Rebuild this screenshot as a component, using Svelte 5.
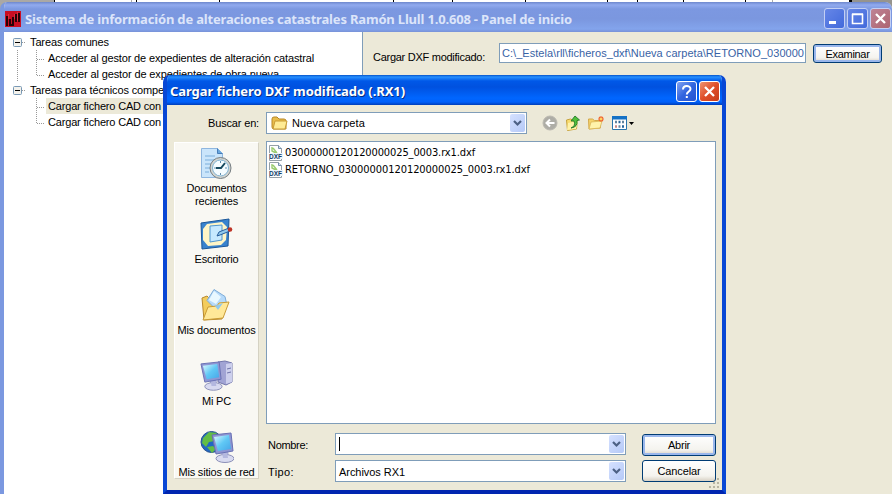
<script>
  const common = [
    { text: 'Acceder al gestor de expedientes de alteración catastral', w: 266 },
    { text: 'Acceder al gestor de expedientes de obra nueva', w: 231 }
  ];
  const technical = [
    { text: 'Cargar fichero CAD con', w: 113, selected: true },
    { text: 'Cargar fichero CAD con', w: 113 }
  ];
  const files = [
    { name: '03000000120120000025_0003.rx1.dxf', w: 190 },
    { name: 'RETORNO_03000000120120000025_0003.rx1.dxf', w: 245 }
  ];

  // Spreads the letters of a label so that it fills the given width.
  function fit(node, width) {
    const n = node.textContent.length;
    const natural = node.getBoundingClientRect().width;
    node.style.letterSpacing = (width - natural) / n + 'px';
  }
</script>

{#snippet arrow()}
  <span class="drop"><svg width="15" height="18" viewBox="0 0 15 18"><path d="M4 7l3.500 3.500L11 7" fill="none" stroke="#4d6185" stroke-width="2.200" /></svg></span>
{/snippet}

{#snippet branch(title, w, items, linked)}
  <div class="node">
    <svg width="26" height="16" viewBox="0 0 26 16">
      <path d="M18 8.500h4" stroke="#999" stroke-dasharray="1 1" />
      <rect x="9.500" y="4.500" width="8" height="8" rx="1" fill="#f4f2ec" stroke="#7898b5" />
      <path d="M11 8.500h5" stroke="#000" />
    </svg>
    <span use:fit={w}>{title}</span>
  </div>
  {#each items as item, i}
    <div class="leaf">
      <svg width="42" height="16" viewBox="0 0 42 16">
        <path d={i === items.length - 1 ? 'M32.5 0v10' : 'M32.5 0v16'} stroke="#999" stroke-dasharray="1 1" />
        <path d="M33 9.500h8" stroke="#999" stroke-dasharray="1 1" />
        {#if linked}<path d="M13.500 0v16" stroke="#999" stroke-dasharray="1 1" />{/if}
      </svg>
      <div class="leaf-text" class:selected={item.selected}><span use:fit={item.w}>{item.text}</span></div>
    </div>
  {/each}
{/snippet}

{#snippet monitor()}
  <path d="M10 19l7-1 1 8h-7z" fill="#a4a9d7" />
  <ellipse cx="14" cy="26.500" rx="9" ry="4" fill="#d8daf0" stroke="#8c90b8" />
  <path d="M11 20l5-1 1 7h-5z" fill="#b4b8df" />
  <path d="M1 3l19-2 2 18-17 3z" fill="#8e96d3" stroke="#6970b3" />
  <path d="M3 5l15-2 2 14-13 2z" fill="url(#screen)" />
{/snippet}

<div class="desktop">
  <svg class="behind" width="892" height="10" viewBox="0 0 892 10">
    <path d="M0 0h54v10H0z" fill="#aaa8a5" />
    <path d="M54.500 0v3M136.500 0v2M219.500 0v2M393.500 0v2M452.500 0v2M525.500 0v2M607.500 0v2M637.500 0v2M683.500 0v2M745.500 0v2" stroke="#000" />
    <path d="M131.500 0v3M772.500 0v3" stroke="#aaa" />
    <path d="M849 0h3v8h-3z" fill="#000" /><path d="M852 0h40v10h-40z" fill="#96948e" />
  </svg>

  <div class="window">
    <header class="main-title">
      <svg class="app-icon" width="16" height="16" viewBox="0 0 16 16">
        <path d="M0 0h16v16H0z" fill="#c90d22" />
        <path d="M2 5v10M5 8v6h3V6M11 3v8M14 2v9" fill="none" stroke="#280306" stroke-width="2" />
        <path d="M3.500 3v5M9.500 3v5M12.500 1v9" stroke="#ef4150" stroke-width=".6" />
      </svg>
      <span class="title-text" use:fit={547}>Sistema de información de alteraciones catastrales Ramón Llull 1.0.608 - Panel de inicio</span>
      <div class="controls">
        <span class="ctl"><svg viewBox="0 0 19 19"><path d="M4 13.500h7" stroke="#fff" stroke-width="3" /></svg></span>
        <span class="ctl"><svg viewBox="0 0 19 19"><path d="M4.500 5.500h10v9h-10zM4 5h11" fill="none" stroke="#fff" stroke-width="1.600" /></svg></span>
        <span class="ctl close"><svg viewBox="0 0 19 19"><path d="M5 5l9 9M14 5l-9 9" stroke="#fff" stroke-width="2.300" /></svg></span>
      </div>
    </header>
    <div class="content">
      <nav class="tree">
        {@render branch('Tareas comunes', 79, common, true)}
        {@render branch('Tareas para técnicos compe', 134, technical, false)}
      </nav>
      <main>
        <div class="load-row">
          <label for="path"><span use:fit={112}>Cargar DXF modificado:</span></label>
          <div class="path" id="path"><span use:fit={302}>C:\_Estela\rll\ficheros_dxf\Nueva carpeta\RETORNO_030000</span></div>
          <button class="focus browse"><span use:fit={44}>Examinar</span></button>
        </div>
      </main>
    </div>
  </div>

  <section class="dialog">
    <header class="dialog-title">
      <span class="title-text" use:fit={235}>Cargar fichero DXF modificado (.RX1)</span>
      <div class="controls">
        <span class="ctl"><svg viewBox="0 0 19 19"><path d="M6 7.500c0-4.500 7.500-4.500 7.500-.5 0 2.500-3.700 2.500-3.700 5.500M9.800 14v2" fill="none" stroke="#fff" stroke-width="2" /></svg></span>
        <span class="ctl close"><svg viewBox="0 0 19 19"><path d="M5 5l9 9M14 5l-9 9" stroke="#fff" stroke-width="2.300" /></svg></span>
      </div>
    </header>
    <div class="dialog-body">
      <div class="lookup">
        <span class="lookup-label"><span use:fit={51}>Buscar en:</span></span>
        <div class="combo look-combo">
          <svg width="17" height="16" viewBox="0 0 17 16">
            <path d="M1 4q0-2 2-2h3l2 2h5q2 0 2 2v8H3q-2 0-2-2z" fill="#e9bd4b" stroke="#b78726" />
            <path d="M4 6h12l-2 8H2z" fill="#ffeb94" stroke="#c99b35" />
          </svg>
          <span class="combo-text"><span use:fit={73}>Nueva carpeta</span></span>
          {@render arrow()}
        </div>
        <div class="tools">
          <svg width="16" height="16" viewBox="0 0 16 16"><circle cx="8" cy="8" r="7" fill="#aeada6" stroke="#bab8b0" /><path d="M12.500 8H5M8 4.500L4.500 8 8 11.500" fill="none" stroke="#fff" stroke-width="2" /></svg>
          <svg width="16" height="16" viewBox="0 0 16 16"><path d="M1.500 5l4-1 2 1 5-1-1 10-9 1.500z" fill="#f9dc70" stroke="#c6a23c" /><path d="M3 8l10-2-2 8-9 1z" fill="#fff2a8" /><path d="M6 13q5-2 3-7H6l4-5 4.500 4-2.500.5Q13 12 6 13z" fill="#4fc03a" stroke="#24782b" stroke-width=".9" /></svg>
          <svg width="16" height="16" viewBox="0 0 16 16"><path d="M.5 4h4l2 1.500h6V13L1 14z" fill="#f5d36a" stroke="#d4a84a" /><path d="M3 7l11-1-2 7-11 1z" fill="#fff3aa" stroke="#d9b657" stroke-width=".8" /><path d="M13 1v6M10 4h6M11 2l4 4M15 2l-4 4" stroke="#f0642c" stroke-width="1.100" /><circle cx="13" cy="4" r="1.200" fill="#ffd75c" /></svg>
          <svg width="23" height="16" viewBox="0 0 23 16"><path d="M1.500 1.500h14v13h-14z" fill="#fff" stroke="#2775ad" /><path d="M1 1h15v3.500H1z" fill="#1471c5" /><path d="M4 7h2M11 7h2M7.500 11.500h2" stroke="#61849d" stroke-width="2.500" /><path d="M7.500 7h2M11 11.500h2" stroke="#25659a" stroke-width="2.500" /><path d="M4 11.500h2" stroke="#c48785" stroke-width="2.500" /><path d="M18 7h5l-2.500 3z" fill="#000" /></svg>
        </div>
      </div>

      <div class="browser">
        <nav class="places">
          <div class="place recent">
            <svg width="34" height="34" viewBox="0 0 34 34">
              <defs><linearGradient id="screen" x1="0" y1="0" x2="1" y2="1"><stop stop-color="#e0fbff" /><stop offset=".5" stop-color="#60c8f5" /><stop offset="1" stop-color="#46a5e7" /></linearGradient></defs>
              <path d="M1.500.5h16l5 5v24h-21z" fill="#cae5fb" stroke="#8fb6df" /><path d="M17.500.5v5h5" fill="#6aa8df" stroke="#477db8" />
              <path d="M5 8h10M5 12h12M5 16h7M5 20h5M5 24h4" stroke="#7baedb" />
              <circle cx="20.500" cy="20" r="10.500" fill="#d2d4d0" stroke="#777f83" /><circle cx="20.500" cy="20" r="8" fill="#f5fcff" stroke="#81b3d2" />
              <path d="M20.500 13v2M20.500 25v2M14 20h2M25 20h2" stroke="#608fae" /><path d="M25 15l-4 5h-5" fill="none" stroke="#174b60" stroke-width="2" />
            </svg>
            <span use:fit={60}>Documentos</span><span use:fit={43}>recientes</span>
          </div>
          <div class="place">
            <svg width="34" height="34" viewBox="0 0 34 34">
              <path d="M1 6l28-4-1 27-26 3z" fill="#3983ce" stroke="#1b5799" /><path d="M7 7l15-2 5 5-1 13-5 5-13 1-5-6V12z" fill="#fff5c6" />
              <path d="M10 9l12-1v15l-12 2z" fill="#c6e9ff" stroke="#5096cf" /><path d="M17 19l2-4 10-4 1 3-10 4z" fill="#90caee" stroke="#285e9d" /><circle cx="30" cy="12.500" r="2.300" fill="#be3426" />
            </svg>
            <span use:fit={44}>Escritorio</span>
          </div>
          <div class="place">
            <svg width="34" height="34" viewBox="0 0 34 34">
              <path d="M2 10l5-2 4 4 14 2-3 17-18 1z" fill="#f3cc5c" stroke="#b8892e" /><path d="M14 1.500l11 7 2 9-9 6-11-11z" fill="#b6dafa" stroke="#7eacd7" /><path d="M14 3l7 6-5 7-7-4z" fill="#e9f8ff" /><path d="M3 32l5-13 9-1 2-3 10-1-6 16z" fill="#ffe898" stroke="#c99b36" /><path d="M15 18l8-3-5 7z" fill="#91c9ef" />
            </svg>
            <span use:fit={78}>Mis documentos</span>
          </div>
          <div class="place">
            <svg width="34" height="34" viewBox="0 0 34 34">
              <path d="M18 3l7-1 7 2v19l-6 3-8-3z" fill="#a1a4d4" stroke="#7377ac" /><path d="M26 5l6-1v19l-6 2z" fill="#cdd0ed" /><path d="M27 10l4-1M27 14l4-1" stroke="#7075aa" /><g transform="translate(0 2) scale(.96)">{@render monitor()}</g>
            </svg>
            <span use:fit={29}>Mi PC</span>
          </div>
          <div class="place">
            <svg width="34" height="34" viewBox="0 0 34 34">
              <circle cx="11.500" cy="12" r="10.500" fill="#2168c4" stroke="#2b528c" /><path d="M3 8l6-6 8 1-4 4 2 4-6 1-3 5-4-4zM7 17l6-1 3 3-4 4z" fill="#63bd45" /><g transform="translate(11 2)">{@render monitor()}</g>
            </svg>
            <span use:fit={76}>Mis sitios de red</span>
          </div>
        </nav>
        <div class="files">
          {#each files as file}
            <div class="file">
              <svg width="16" height="16" viewBox="0 0 16 16">
                <path d="M1.500.500h9l3 3v12h-12z" fill="#fff" stroke="#96a0a7" /><path d="M10.500.5v3h3" fill="#d4e2ef" stroke="#748eaa" /><path d="M4 2v4l4 2M5 3l4 5" fill="none" stroke="#9acb70" stroke-width="1.400" />
                <path d="M1 8h14v6H1z" fill="#edf5fa" /><text x="1" y="14" textLength="13" lengthAdjust="spacingAndGlyphs">DXF</text>
              </svg>
              <span use:fit={file.w}>{file.name}</span>
            </div>
          {/each}
        </div>
      </div>

      <div class="form">
        <div class="fields">
          <div class="field"><span class="field-label"><span use:fit={40}>Nombre:</span></span><div class="combo"><i class="caret"></i>{@render arrow()}</div></div>
          <div class="field"><span class="field-label"><span use:fit={26}>Tipo:</span></span><div class="combo"><span class="combo-text"><span use:fit={66}>Archivos RX1</span></span>{@render arrow()}</div></div>
        </div>
        <div class="actions">
          <button class="focus"><span use:fit={22}>Abrir</span></button>
          <button><span use:fit={43}>Cancelar</span></button>
        </div>
      </div>
    </div>
    <svg class="grip" width="12" height="12" viewBox="0 0 12 12"><path d="M9 1h2v2H9zM5 5h2v2H5zM9 5h2v2H9zM1 9h2v2H1zM5 9h2v2H5zM9 9h2v2H9z" fill="#b8b5a3" /></svg>
  </section>
</div>

<style>
  :global(body) { margin: 0; overflow: hidden; }
  .desktop, .desktop * { box-sizing: border-box; }
  .desktop { position: relative; width: 892px; height: 494px; overflow: hidden; background: #fff; font: 11px/16px "Liberation Sans", Arial, sans-serif; color: #000; white-space: nowrap; }
  svg { display: block; flex: none; }
  .behind { position: absolute; top: 0; left: 0; }
  .window { position: relative; margin-top: 2px; height: 492px; border-left: 4px solid #7b98e0; border-radius: 7px 7px 0 0; overflow: hidden; background: #ece9d8; display: flex; flex-direction: column; }
  .main-title { height: 30px; flex: none; margin-left: -4px; padding: 3px 1px 0 5px; display: flex; align-items: center; background: linear-gradient(#6e88cd, #91aaef 3px, #7c98e1 7px, #7b97df 17px, #83a4ec 27px, #7892d8); }
  .title-text { font: bold 13px/18px "Noto Sans", sans-serif; }
  .main-title .title-text { margin-left: 4px; color: #dce5fa; }
  .controls { margin-left: auto; display: flex; gap: 2px; }
  .ctl { width: 21px; height: 21px; border: 1px solid #fff; border-radius: 3px; background: linear-gradient(135deg, #83a3f1, #3265df 50%, #2453d1); }
  .ctl svg { width: 19px; height: 19px; }
  .ctl.close { background: linear-gradient(135deg, #ee9470, #df4e29 50%, #c73c19); }
  .main-title .ctl { border-color: #c3cff4; background: linear-gradient(135deg, #6686e7, #426adb); }
  .main-title .ctl.close { background: linear-gradient(135deg, #be8496, #ad6470); }
  .content { display: flex; flex: 1; }
  .tree { width: 359px; padding-top: 2px; background: #fff; border-right: 1px solid #7f9db9; }
  .node, .leaf { display: flex; height: 16px; line-height: 17px; }
  .leaf-text { padding: 0 2px; }
  .selected { background: #ece9d8; }
  main { flex: 1; padding: 11px 10px 0 10px; }
  .load-row { display: flex; align-items: flex-start; }
  .load-row label { width: 126px; padding-top: 6px; }
  .path { width: 307px; height: 20px; border: 1px solid #7f9db9; padding: 0 2px; background: #fff; color: #3862a5; line-height: 18px; }
  button { width: 74px; height: 22px; padding: 0; border: 1px solid #003c74; border-radius: 3px; background: linear-gradient(#fff, #f4f3ee 75%, #d8d1c4); font: 11px/16px "Liberation Sans", Arial, sans-serif; color: #000; }
  button.focus { box-shadow: inset 0 0 0 2px #9ab7ec; }
  .browse { width: 69px; height: 19px; margin: 1px 0 0 7px; }
  .dialog { position: absolute; left: 163px; top: 75px; width: 563px; height: 419px; border: solid #0847d5; border-width: 0 4px 4px; border-radius: 7px 7px 0 0; background: #ece9d8; overflow: hidden; border-bottom-color: #0025b0; }
  .dialog-title { height: 30px; margin: 0 -4px; padding: 2px 6px 0 7px; display: flex; align-items: center; color: #fff; background: linear-gradient(#0553c9, #2790ff 2px, #0058e8 6px, #0051df 12px, #0066ff 23px, #0060fa 27px, #003eb8); }
  .dialog-title .title-text { text-shadow: 1px 1px #072e83; }
  .dialog-body { padding: 7px 6px 0 7px; }
  .lookup { display: flex; align-items: center; height: 22px; }
  .lookup-label { width: 92px; padding-left: 34px; }
  .combo { display: flex; align-items: center; height: 22px; border: 1px solid #7f9db9; background: #fff; padding: 1px; }
  .look-combo { width: 261px; padding-left: 4px; }
  .combo-text { margin-left: 2px; padding-top: 1px; }
  .look-combo .combo-text { margin-left: 4px; padding-top: 0; }
  .drop { margin-left: auto; width: 15px; height: 18px; border-radius: 2px; background: linear-gradient(135deg, #d5e1ff, #b5c9f7); }
  .tools { display: flex; gap: 7px; margin-left: 15px; }
  .browser { display: flex; gap: 7px; margin-top: 7px; height: 283px; }
  .places { width: 85px; height: 337px; margin-top: 1px; padding-top: 5px; background: #f9f8f3; border: 1px solid #fff; border-right-color: #d5d2c3; border-bottom-color: #d5d2c3; flex: none; }
  .place { height: 71px; display: flex; flex-direction: column; align-items: center; line-height: 13px; }
  .place svg { margin-bottom: 2px; }
  .recent svg { margin-bottom: 0; }
  .recent { height: 69px; }
  .files { width: 450px; border: 1px solid #7f9db9; background: #fff; padding: 2px 1px; font: 11px/17px "DejaVu Sans Condensed", sans-serif; }
  .file { display: flex; gap: 1px; height: 17px; align-items: center; }
  .file text { font: bold 7px "Liberation Sans", sans-serif; fill: #163f67; }
  .form { margin: 9px 0 0 94px; display: flex; justify-content: space-between; }
  .fields { width: 358px; }
  .fields .field + .field { margin-top: 5px; }
  .field { display: flex; height: 22px; align-items: center; }
  .field-label { width: 67px; padding-top: 2px; }
  .field .combo { width: 291px; }
  .caret { width: 1px; height: 14px; background: #000; margin-left: 2px; }
  .actions { display: flex; flex-direction: column; gap: 4px; padding-top: 1px; }
  .grip { position: absolute; right: 2px; bottom: 1px; }
</style>
